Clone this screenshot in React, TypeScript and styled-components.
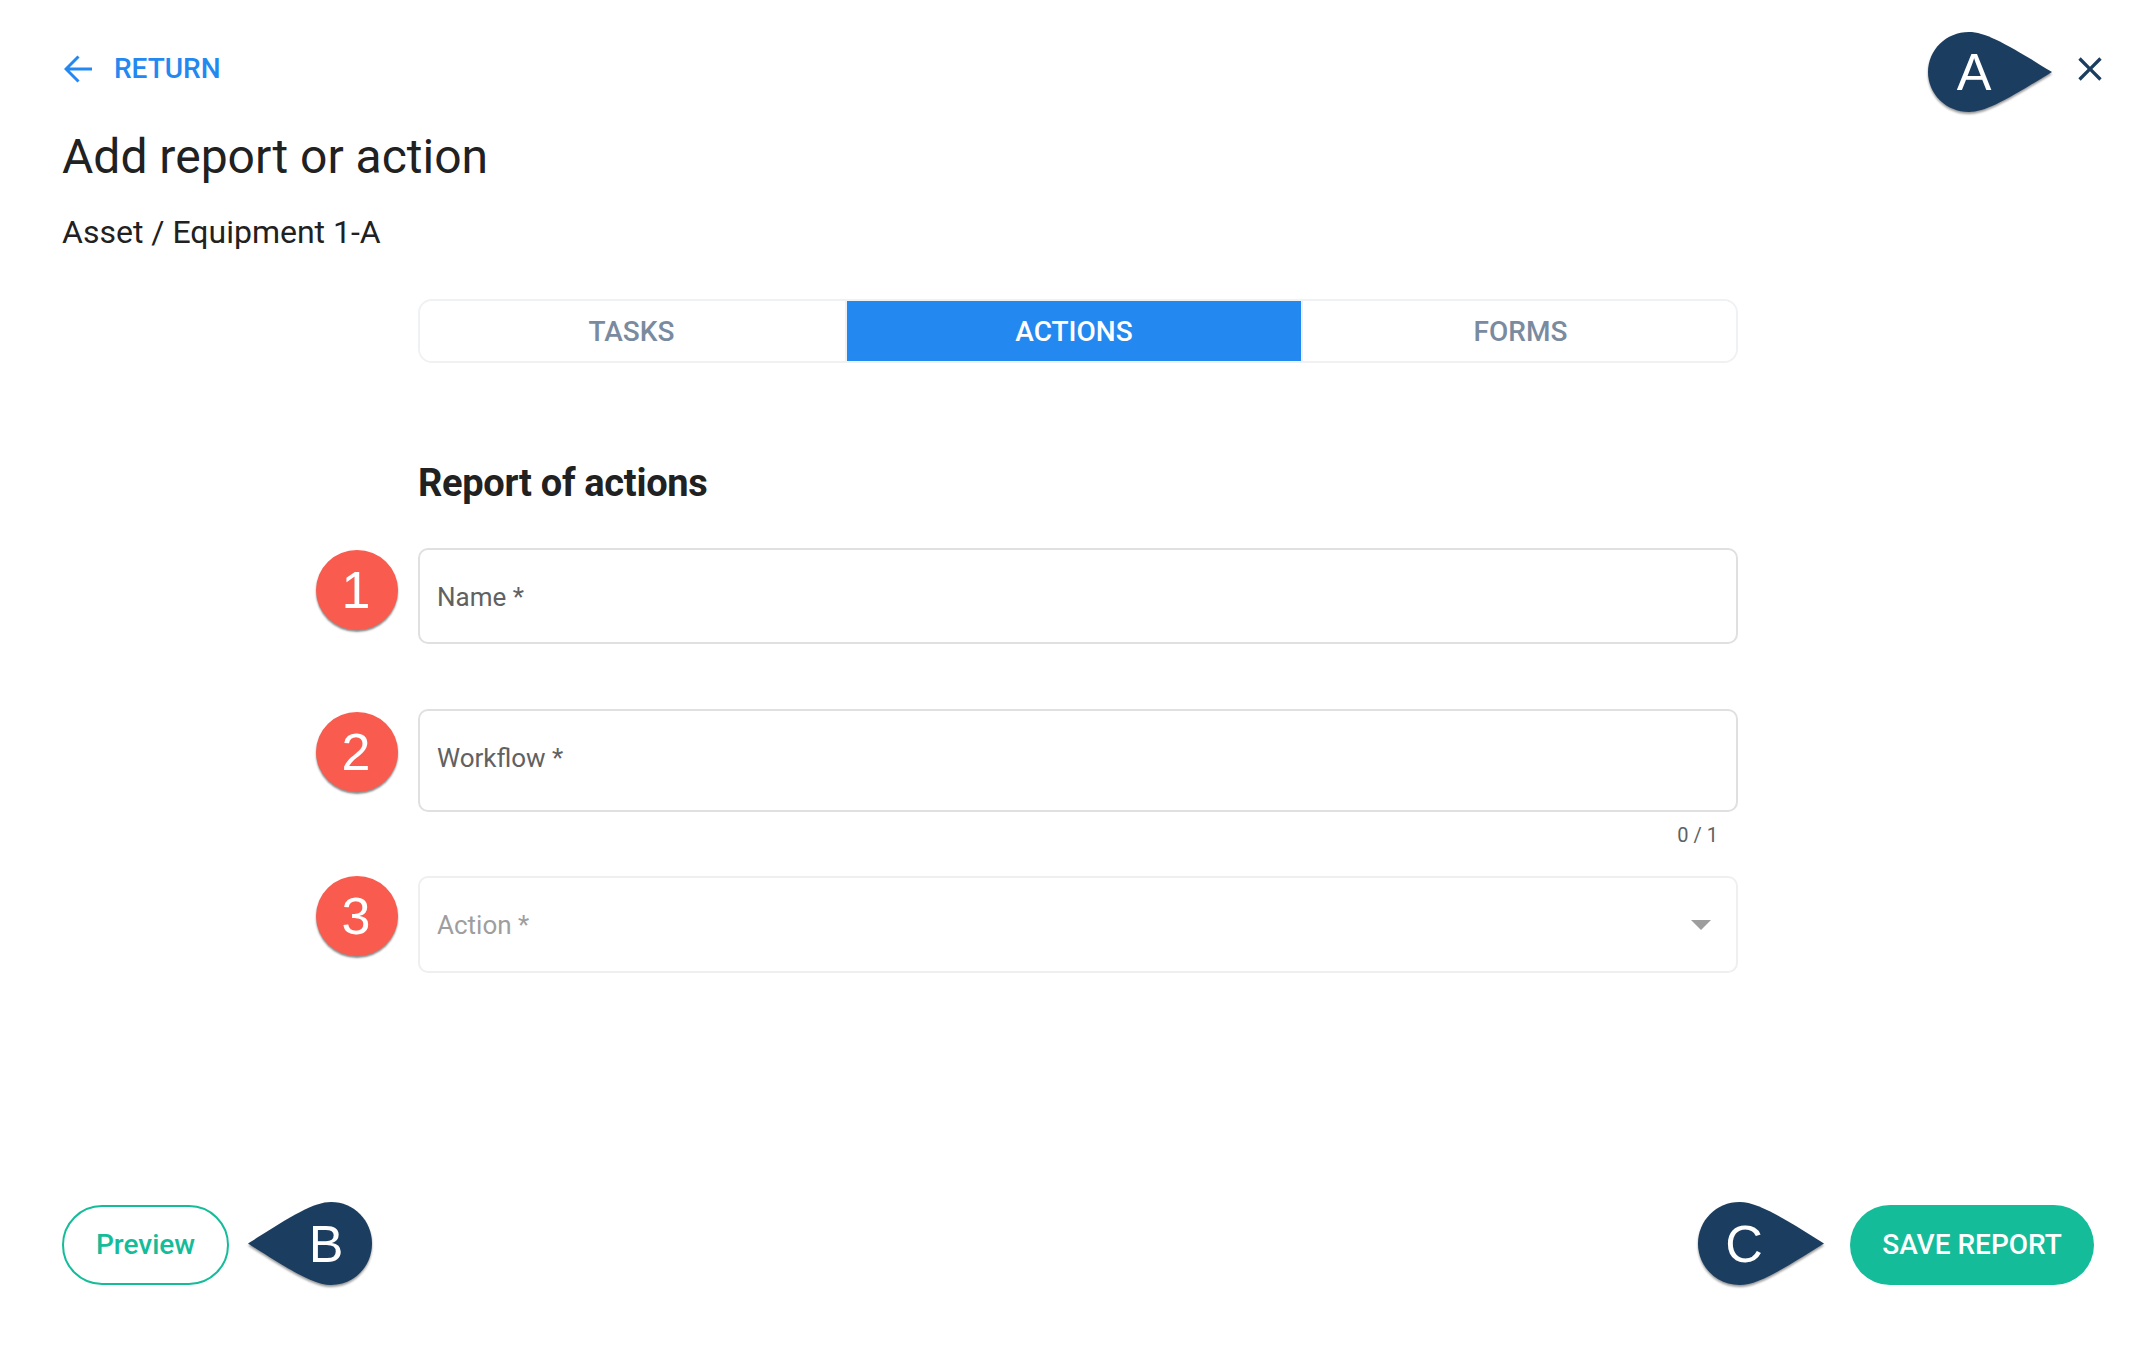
import React from "react";
import styled, { createGlobalStyle } from "styled-components";

const Global = createGlobalStyle`
  html, body { margin: 0; padding: 0; background: #fff; }
  body { font-family: Roboto, "Liberation Sans", sans-serif; color: #212121; }
  * { box-sizing: border-box; }
`;

const Page = styled.div`
  width: 2156px;
  height: 1346px;
  padding: 49px 62px 61px;
  display: flex;
  flex-direction: column;
  overflow: hidden;
`;

const TopBar = styled.header`
  display: flex;
  justify-content: space-between;
  align-items: flex-start;
  height: 40px;
`;

const ReturnLink = styled.a`
  display: flex;
  align-items: center;
  height: 40px;
  gap: 22px;
  padding-left: 2px;
  color: #2389f0;
  font-size: 28px;
  font-weight: 500;
  line-height: 40px;
`;

const TopRight = styled.div`
  display: flex;
  align-items: flex-start;
  gap: 18px;
  margin-right: -16px;
`;

const CloseIcon = styled.svg`
  width: 40px;
  height: 40px;
  display: block;
  fill: #1b3d5f;
`;

const Title = styled.h1`
  margin: 40px 0 0;
  font-size: 48px;
  line-height: 56px;
  font-weight: 400;
  color: #212121;
`;

const Subtitle = styled.div`
  margin-top: 27px;
  font-size: 32px;
  line-height: 40px;
  color: #212121;
`;

const Content = styled.main`
  margin: 47px 0 0 356px;
  width: 1320px;
`;

const Tabs = styled.nav`
  display: flex;
  height: 64px;
  border: 2px solid #eff1f3;
  border-radius: 14px;
  overflow: hidden;
`;

const Tab = styled.div<{ $active?: boolean; $width: number; $divider?: boolean; $textShift?: number }>`
  flex: 0 0 ${(p) => p.$width}px;
  display: flex;
  align-items: center;
  justify-content: center;
  padding-left: ${(p) => Math.max(p.$textShift ?? 0, 0)}px;
  padding-right: ${(p) => Math.max(-(p.$textShift ?? 0), 0)}px;
  font-size: 28px;
  font-weight: 500;
  color: ${(p) => (p.$active ? "#fff" : "#7a8b9f")};
  background: ${(p) => (p.$active ? "#2389f0" : "#fff")};
  border-left: ${(p) => (p.$divider ? "2px solid #eff1f3" : "0")};
`;

const SectionTitle = styled.h2`
  margin: 97px 0 42px;
  font-size: 38px;
  line-height: 46px;
  font-weight: 700;
  letter-spacing: -0.3px;
  color: #212121;
`;

const Field = styled.div<{ $height: number; $nudge: number; $disabled?: boolean }>`
  position: relative;
  display: flex;
  align-items: center;
  justify-content: space-between;
  height: ${(p) => p.$height}px;
  padding: ${(p) => (p.$nudge > 0 ? p.$nudge : 0)}px 18px ${(p) => (p.$nudge < 0 ? -p.$nudge : 0)}px 17px;
  border: 2px solid ${(p) => (p.$disabled ? "#efefef" : "#e0e0e0")};
  border-radius: 10px;
  background: #fff;
`;

const FieldLabel = styled.span<{ $disabled?: boolean }>`
  font-size: 26px;
  line-height: 32px;
  color: ${(p) => (p.$disabled ? "#9e9e9e" : "#616161")};
`;

const Caret = styled.span`
  width: 0;
  height: 0;
  margin-right: 7px;
  border-left: 10px solid transparent;
  border-right: 10px solid transparent;
  border-top: 10px solid #9e9e9e;
`;

const Counter = styled.div`
  height: 28px;
  margin: 9px 0 27px;
  padding-right: 20px;
  text-align: right;
  font-size: 20px;
  line-height: 28px;
  color: #616161;
`;

const FieldGap = styled.div`
  height: 65px;
`;

const StepBadge = styled.div<{ $top: number }>`
  position: absolute;
  left: -104px;
  top: ${(p) => p.$top}px;
  width: 82px;
  height: 80px;
  padding-right: 2px;
  border-radius: 50%;
  background: #f95b4e;
  box-shadow: 0 2px 2px rgba(0, 0, 0, 0.45);
  display: flex;
  align-items: center;
  justify-content: center;
  color: #fff;
  font-family: "Liberation Sans", Arial, sans-serif;
  font-size: 52px;
  line-height: 1;
`;

const Footer = styled.footer`
  margin-top: auto;
  display: flex;
  justify-content: space-between;
  align-items: flex-start;
`;

const FooterGroup = styled.div`
  display: flex;
  align-items: flex-start;
`;

const PreviewButton = styled.button`
  width: 167px;
  height: 80px;
  margin: 0 19px 0 0;
  padding: 0 0 2px;
  border: 2px solid #14bc99;
  border-radius: 40px;
  background: #fff;
  color: #14bc99;
  font-family: Roboto, sans-serif;
  font-size: 28px;
  font-weight: 500;
`;

const SaveButton = styled.button`
  width: 244px;
  height: 80px;
  margin: 0 0 0 26px;
  padding: 0 0 2px;
  border: 0;
  border-radius: 40px;
  background: #14bc99;
  color: #fff;
  font-family: Roboto, sans-serif;
  font-size: 28px;
  font-weight: 500;
`;

const PinBox = styled.div<{ $flip?: boolean; $offset: number; $width: number; $height: number }>`
  position: relative;
  flex: none;
  width: ${(p) => p.$width}px;
  height: ${(p) => p.$height}px;
  margin-top: ${(p) => p.$offset}px;
  display: flex;
  align-items: center;
  justify-content: ${(p) => (p.$flip ? "flex-end" : "flex-start")};
  color: #fff;
  font-family: "Liberation Sans", Arial, sans-serif;
  font-size: 52px;
  line-height: 1;
`;

const PinShape = styled.svg<{ $flip?: boolean }>`
  position: absolute;
  inset: 0;
  width: 100%;
  height: 100%;
  overflow: visible;
  fill: #1b3d5f;
  filter: drop-shadow(0 2px 1px rgba(0, 0, 0, 0.4));
  transform: ${(p) => (p.$flip ? "scaleX(-1)" : "none")};
`;

const PinLetter = styled.span`
  position: relative;
  width: 92px;
  text-align: center;
`;

function Pin({
  letter,
  flip,
  offset,
  width = 124,
  height = 80,
}: {
  letter: string;
  flip?: boolean;
  offset: number;
  width?: number;
  height?: number;
}) {
  return (
    <PinBox $flip={flip} $offset={offset} $width={width} $height={height}>
      <PinShape $flip={flip} viewBox="0 0 124 80" preserveAspectRatio="none">
        <path d="M41 0C58 0 80 13 124 40C80 67 58 80 41 80C18 80 0 62 0 40C0 18 18 0 41 0Z" />
      </PinShape>
      <PinLetter>{letter}</PinLetter>
    </PinBox>
  );
}

export default function App() {
  return (
    <>
      <Global />
      <Page>
        <TopBar>
          <ReturnLink>
            <svg width="28" height="28" viewBox="0 0 28 28" fill="none" stroke="#2389f0" strokeWidth="3">
              <path d="M28 14H3M14.5 1.5L2 14l12.5 12.5" />
            </svg>
            RETURN
          </ReturnLink>
          <TopRight>
            <Pin letter="A" offset={-17} />
            <CloseIcon viewBox="0 0 24 24">
              <path d="M19 6.41 17.59 5 12 10.59 6.41 5 5 6.41 10.59 12 5 17.59 6.41 19 12 13.41 17.59 19 19 17.59 13.41 12z" />
            </CloseIcon>
          </TopRight>
        </TopBar>
        <Title>Add report or action</Title>
        <Subtitle>Asset / Equipment 1-A</Subtitle>
        <Content>
          <Tabs>
            <Tab $width={425} $textShift={-2}>
              TASKS
            </Tab>
            <Tab $width={456} $divider $active>
              ACTIONS
            </Tab>
            <Tab $width={435} $divider $textShift={2}>
              FORMS
            </Tab>
          </Tabs>
          <SectionTitle>Report of actions</SectionTitle>
          <Field $height={96} $nudge={2}>
            <StepBadge $top={0}>1</StepBadge>
            <FieldLabel>Name *</FieldLabel>
          </Field>
          <FieldGap />
          <Field $height={103} $nudge={-6}>
            <StepBadge $top={1}>2</StepBadge>
            <FieldLabel>Workflow *</FieldLabel>
          </Field>
          <Counter>0 / 1</Counter>
          <Field $height={97} $nudge={1} $disabled>
            <StepBadge $top={-2}>3</StepBadge>
            <FieldLabel $disabled>Action *</FieldLabel>
            <Caret />
          </Field>
        </Content>
        <Footer>
          <FooterGroup>
            <PreviewButton>Preview</PreviewButton>
            <Pin letter="B" flip offset={-3} height={83} />
          </FooterGroup>
          <FooterGroup>
            <Pin letter="C" offset={-3} width={126} height={83} />
            <SaveButton>SAVE REPORT</SaveButton>
          </FooterGroup>
        </Footer>
      </Page>
    </>
  );
}
